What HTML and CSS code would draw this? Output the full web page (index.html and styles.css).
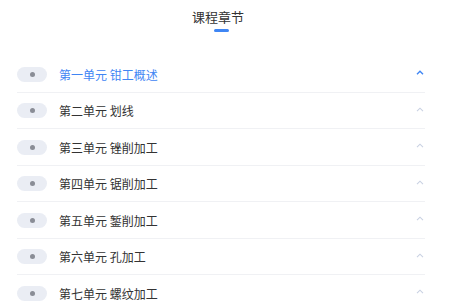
FILE: index.html
```html
<!DOCTYPE html>
<html lang="zh">
<head>
<meta charset="utf-8">
<link rel="stylesheet" href="styles.css">
</head>
<body>
<div class="page">
  <div class="header">
    <div class="title">课程章节</div>
    <div class="bar"></div>
  </div>
  <ul class="list">
    <li class="row active"><span class="pill"><span class="dot"></span></span><span class="name">第一单元 钳工概述</span><svg class="chev" width="8" height="5" viewBox="0 0 8 5"><polyline points="1,4.2 4,1.2 7,4.2" fill="none" stroke="currentColor" stroke-width="1.4"/></svg></li>
    <li class="row"><span class="pill"><span class="dot"></span></span><span class="name">第二单元 划线</span><svg class="chev" width="8" height="5" viewBox="0 0 8 5"><polyline points="1,4.2 4,1.2 7,4.2" fill="none" stroke="currentColor" stroke-width="1.1"/></svg></li>
    <li class="row"><span class="pill"><span class="dot"></span></span><span class="name">第三单元 锉削加工</span><svg class="chev" width="8" height="5" viewBox="0 0 8 5"><polyline points="1,4.2 4,1.2 7,4.2" fill="none" stroke="currentColor" stroke-width="1.1"/></svg></li>
    <li class="row"><span class="pill"><span class="dot"></span></span><span class="name">第四单元 锯削加工</span><svg class="chev" width="8" height="5" viewBox="0 0 8 5"><polyline points="1,4.2 4,1.2 7,4.2" fill="none" stroke="currentColor" stroke-width="1.1"/></svg></li>
    <li class="row"><span class="pill"><span class="dot"></span></span><span class="name">第五单元 錾削加工</span><svg class="chev" width="8" height="5" viewBox="0 0 8 5"><polyline points="1,4.2 4,1.2 7,4.2" fill="none" stroke="currentColor" stroke-width="1.1"/></svg></li>
    <li class="row"><span class="pill"><span class="dot"></span></span><span class="name">第六单元 孔加工</span><svg class="chev" width="8" height="5" viewBox="0 0 8 5"><polyline points="1,4.2 4,1.2 7,4.2" fill="none" stroke="currentColor" stroke-width="1.1"/></svg></li>
    <li class="row"><span class="pill"><span class="dot"></span></span><span class="name">第七单元 螺纹加工</span><svg class="chev" width="8" height="5" viewBox="0 0 8 5"><polyline points="1,4.2 4,1.2 7,4.2" fill="none" stroke="currentColor" stroke-width="1.1"/></svg></li>
  </ul>
</div>
</body>
</html>
```
FILE: styles.css
```css
html, body {
  margin: 0;
  padding: 0;
  background: #fff;
  font-family: "Noto Sans CJK SC", "Noto Sans", sans-serif;
  color: #333;
  overflow: hidden;
}
.page {
  width: 442px;
}
.header {
  display: flex;
  flex-direction: column;
  align-items: center;
  padding-top: 8px;
}
.title {
  font-size: 13px;
  line-height: 18px;
  color: #333;
  margin-left: -6px;
}
.bar {
  width: 15px;
  height: 3px;
  border-radius: 1.5px;
  background: #3f86f4;
  margin-top: 3px;
}
.list {
  list-style: none;
  margin: 0;
  padding: 0 17px;
  margin-top: 24px;
}
.row {
  display: flex;
  align-items: center;
  height: 15px;
  padding: 10.5px 0 10px;
  border-bottom: 1px solid #f0f1f4;
}
.pill {
  width: 30px;
  height: 15px;
  border-radius: 8px;
  background: #eaedf4;
  display: flex;
  align-items: center;
  justify-content: center;
  flex: none;
}
.dot {
  width: 5px;
  height: 5px;
  border-radius: 50%;
  background: #8a8d96;
}
.name {
  margin-left: 12px;
  font-size: 12px;
  line-height: 15px;
  flex: 1;
}
.chev {
  color: #c9d1e2;
  margin-right: 1px;
  margin-top: -3px;
}
.active .name {
  color: #3f86f4;
}
.active .chev {
  color: #3f86f4;
}
```
